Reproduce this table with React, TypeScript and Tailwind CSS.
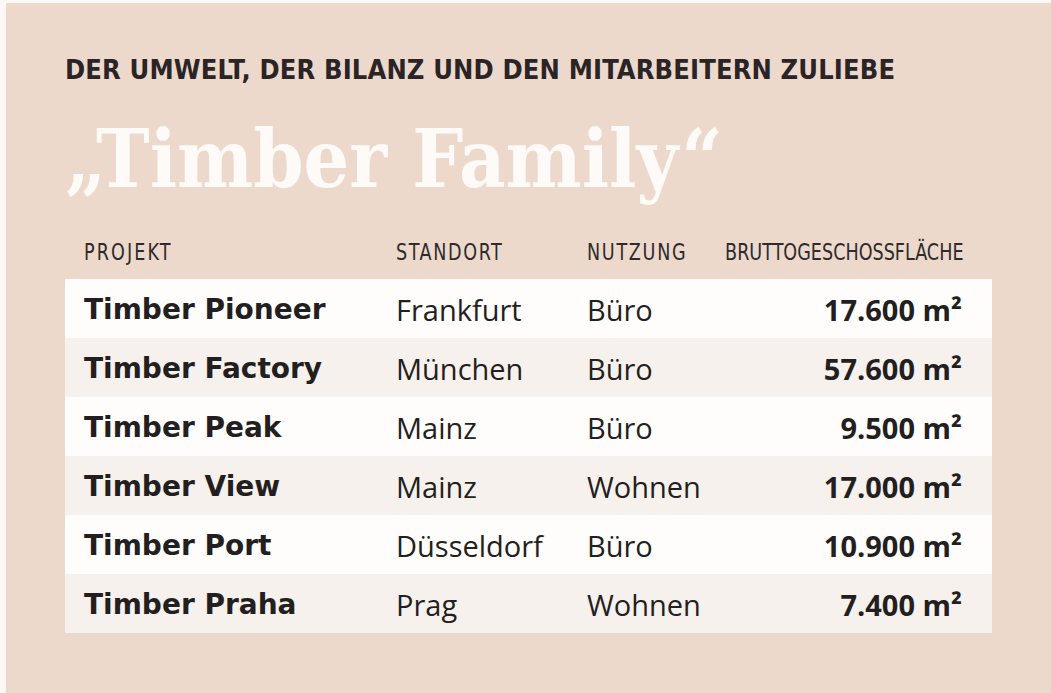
import React from "react";

const rows = [
  { name: "Timber Pioneer", ort: "Frankfurt", use: "Büro", area: "17.600" },
  { name: "Timber Factory", ort: "München", use: "Büro", area: "57.600" },
  { name: "Timber Peak", ort: "Mainz", use: "Büro", area: "9.500" },
  { name: "Timber View", ort: "Mainz", use: "Wohnen", area: "17.000" },
  { name: "Timber Port", ort: "Düsseldorf", use: "Büro", area: "10.900" },
  { name: "Timber Praha", ort: "Prag", use: "Wohnen", area: "7.400" },
];

export default function App() {
  return (
    <div className="w-[1051px] h-[693px] bg-[#fbf8f5] pl-[6px] pt-[3px] overflow-hidden">
      <div className="h-full bg-[#ecd9cc] px-[59px] pt-[49px]">
        <h2 className="font-['DejaVu_Sans_Condensed','DejaVu_Sans',sans-serif] text-[27px] leading-[36px] font-bold tracking-[0.15px] text-[#2a2426] whitespace-nowrap">
          DER UMWELT, DER BILANZ UND DEN MITARBEITERN ZULIEBE
        </h2>
        <h1 className="font-['DejaVu_Serif_Condensed','DejaVu_Serif',serif] mt-[26px] text-[80px] leading-[90px] font-bold text-[#fdfaf7] whitespace-nowrap">
          „Timber Family“
        </h1>
        <div className="font-['DejaVu_Sans_Condensed','DejaVu_Sans',sans-serif] mt-[34px] grid grid-cols-[312px_191px_minmax(0,1fr)_auto] pl-[19px] pr-[29px] pb-[13px] text-[23px] leading-[28px] text-[#2f2a2b] whitespace-nowrap">
          <div className="origin-left scale-x-[0.85] tracking-[2.5px]">PROJEKT</div>
          <div className="origin-left scale-x-[0.85] tracking-[1.9px]">STANDORT</div>
          <div className="origin-left scale-x-[0.85] tracking-[2px]">NUTZUNG</div>
          <div className="origin-right scale-x-[0.85] text-right">BRUTTOGESCHOSSFLÄCHE</div>
        </div>
        <div className="flex flex-col">
          {rows.map((r, i) => (
            <div
              key={r.name}
              className={`h-[59px] pt-[3px] grid grid-cols-[312px_191px_minmax(0,1fr)_auto] items-center pl-[19px] pr-[30px] text-[#231f20] ${
                i % 2 === 0 ? "bg-[#fefdfc]" : "bg-[#f7f1ed]"
              }`}
            >
              <div className="font-['DejaVu_Sans',sans-serif] text-[28px] font-bold">{r.name}</div>
              <div className="font-['Open_Sans',sans-serif] text-[29px]">{r.ort}</div>
              <div className="font-['Open_Sans',sans-serif] text-[29px]">{r.use}</div>
              <div className="font-['Open_Sans',sans-serif] text-[29px] font-bold text-right">
                {r.area} m²
              </div>
            </div>
          ))}
        </div>
      </div>
    </div>
  );
}
